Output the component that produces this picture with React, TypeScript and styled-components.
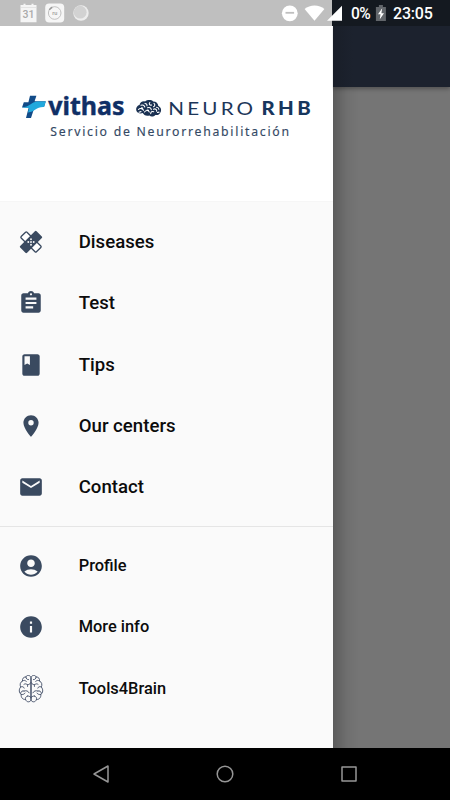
import React from 'react';
import styled, { createGlobalStyle } from 'styled-components';
import { MdAssignment, MdBook, MdPlace, MdEmail, MdAccountCircle, MdInfo } from 'react-icons/md';

const GlobalStyle = createGlobalStyle`
  * { box-sizing: border-box; }
  body { margin: 0; background: #000; font-family: Roboto, sans-serif; }
  svg { display: block; flex: none; }
`;

const Screen = styled.div`
  width: 450px;
  height: 800px;
  display: flex;
  flex-direction: column;
  overflow: hidden;
  background: #000;
`;

const StatusBar = styled.header`
  height: 26px;
  flex: none;
  display: flex;
  background: linear-gradient(90deg, #bfbfbf 332.5px, #141920 332.5px);
`;

const Notifications = styled.div`
  width: 270px;
  display: flex;
  padding: 3px 0 0 19px;
`;

const SystemIcons = styled.div`
  display: flex;
  width: 180px;
  padding-top: 4px;
  color: #fff;
`;

const Percent = styled.span`
  width: 25px;
  padding-left: 1px;
  font-size: 15.6px;
  font-weight: 500;
  line-height: 20px;
  letter-spacing: -0.7px;
`;

const Clock = styled.span`
  margin-left: -1px;
  font-size: 16px;
  font-weight: 500;
  line-height: 20px;
  letter-spacing: -0.2px;
`;

const Body = styled.div`
  height: 722px;
  flex: none;
  display: flex;
`;

const Drawer = styled.nav`
  width: 332.5px;
  flex: none;
  background: #fafafa;
`;

const DrawerHeader = styled.div`
  height: 176px;
  background: #fff;
  border-bottom: 1px solid #f6f6f6;
`;

const List = styled.ul<{ $top?: number }>`
  list-style: none;
  margin: 0;
  padding: ${(p) => p.$top ?? 0}px 0 0;
`;

const Row = styled.li`
  height: 61.25px;
  display: flex;
  align-items: center;
  padding-left: 17.5px;
  color: #3a4a60;
`;

const IconSlot = styled.span`
  width: 61.2px;
  display: flex;
`;

const Label = styled.span<{ $small?: boolean }>`
  color: #0c0c0c;
  font-weight: 500;
  font-size: ${(p) => (p.$small ? 16.4 : 18.6)}px;
  letter-spacing: ${(p) => (p.$small ? 0 : 0.02)}px;
  line-height: 24px;
`;

const Divider = styled.hr`
  margin: 8px 0 8.6px;
  border: 0;
  border-top: 1px solid #e5e5e5;
`;

const Scrim = styled.main`
  flex: 1;
  display: flex;
  flex-direction: column;
  background:
    linear-gradient(90deg, rgba(0, 0, 0, 0.22), rgba(0, 0, 0, 0.05) 14px, transparent 26px),
    #757575;
`;

const AppBar = styled.div`
  height: 61px;
  flex: none;
  background: linear-gradient(90deg, #191e28, #1c222e 20px);
  box-shadow: 0 2px 4px rgba(0, 0, 0, 0.3);
  clip-path: inset(0 0 -8px 0);
`;

const NavBar = styled.footer`
  height: 52px;
  flex: none;
  display: grid;
  grid-template-columns: repeat(3, 1fr);
  padding: 0 38.5px;
  justify-items: center;
  align-items: center;
`;

const NavGlyph = styled.svg`
  fill: none;
  stroke: #969696;
  stroke-width: 1.5;
  stroke-linejoin: round;
`;

const CalendarIcon = () => (
  <svg width="21" height="20" viewBox="0 0 21 20">
    <path d="M1.5 2h3V.7h2V2h6V.7h2V2h3v17.3h-16z" fill="#f5f5f5" />
    <path d="M2 4.5h15" stroke="#d8d8d8" strokeWidth=".6" />
    <text x="9.5" y="15.3" textAnchor="middle" fontFamily="Roboto" fontWeight="500" fontSize="10.5" fill="#aaa">31</text>
  </svg>
);

const RecorderIcon = () => (
  <svg width="32" height="20" viewBox="0 0 32 20">
    <rect x="5.2" y=".5" width="19" height="19" rx="4" fill="#f6f6f6" />
    <circle cx="14.7" cy="10" r="6.3" fill="none" stroke="#bbb" strokeWidth=".9" />
    <path d="M9.3 6.8a6.3 6.3 0 0 1 3-2.6" fill="none" stroke="#999" strokeWidth="1.5" />
    <text x="14.7" y="12" textAnchor="middle" fontFamily="Roboto" fontSize="5.5" fontWeight="700" fill="#aaa">ru</text>
  </svg>
);

const SphereIcon = () => (
  <svg width="18" height="20" viewBox="0 0 18 20">
    <circle cx="9" cy="10" r="7.7" fill="#ededed" />
    <circle cx="8.2" cy="9.2" r="6.4" fill="#d2d2d2" />
  </svg>
);

const StatusGlyphs = () => (
  <svg width="80" height="20" viewBox="0 0 80 20" fill="#fff">
    <circle cx="19.8" cy="9.3" r="7.9" />
    <path d="M15.5 8.8h8.6" stroke="#bfbfbf" strokeWidth="1.8" />
    <path d="M34.6 4.9C39.8.2 49.4.2 54.4 4.9L44.5 16.7z" />
    <path d="M72 1.8v15H57z" />
  </svg>
);

const BatteryIcon = () => (
  <svg width="19" height="20" viewBox="0 0 19 20">
    <path d="M.9 3h3V1h4v2h3v14H.9z" fill="#62666b" />
    <path d="M7.2 4.2 3 10.3h2.5l-.7 5 4.2-6H6.4z" fill="#fff" />
  </svg>
);

const BandageIcon = () => (
  <svg width="26" height="26" viewBox="0 0 26 26">
    <g transform="rotate(45 13 13)">
      <rect x="2.2" y="8.9" width="21.6" height="8.2" rx="1" fill="#fff" stroke="currentColor" strokeWidth="1.3" />
    </g>
    <g transform="rotate(-45 13 13)">
      <rect x="1.4" y="8.1" width="23.2" height="9.8" rx="1.2" fill="currentColor" />
    </g>
    <g fill="#fafafa">
      <circle cx="13" cy="10.3" r=".95" />
      <circle cx="10.3" cy="13" r=".95" />
      <circle cx="13" cy="13" r=".95" />
      <circle cx="15.7" cy="13" r=".95" />
      <circle cx="13" cy="15.7" r=".95" />
    </g>
  </svg>
);

const hemisphere =
  'M13 2.2C11.5-.5 8.5-.2 8 2 5.3 1.8 4.1 4 4.5 6 2 7.2 1.6 10 2.8 12 .6 14 .9 18 3.2 19.4 2.8 22.6 5 24.8 7.5 24.4 8.6 27.6 12 27.5 13 25.2z' +
  'M8 2c0 1.8 1 2.7 2.5 2.6M4.5 6c1.2-1 3-.9 3.8.4M6 9.3c2.2-1.4 4 .2 3.6 2.1M9.4 9.8c1.3.1 2.5-.8 3.4-2M2.8 12c1.4-.8 3-.4 3.4 1.1M6 16c-1.5-.7-3 .4-3.3 2M6.1 16c2.3-.8 4 0 5 1.8M3.2 19.4c1.6.4 3 0 3.8-1.3M7.5 24.4c-.4-1.6.4-3 2-3.4M9.4 21c1.3-.3 2.3.5 3.4 1.4';

const BrainIcon = () => (
  <svg width="26" height="28" viewBox="0 0 26 28" fill="none" stroke="#3d4a63" strokeWidth=".9" strokeLinecap="round">
    <path d={hemisphere} />
    <path d={hemisphere} transform="translate(26 0) scale(-1 1)" />
  </svg>
);

const Logo = () => (
  <svg width="332" height="174" viewBox="0 26 332 174">
    <path d="M30 95.8h6.4l-1.8 5.4h11.2L44 107H34.6L31 118h-5l2.7-10.4H22l1.8-5.4h4.6z" fill="#124b88" />
    <path d="M22 107.5c7.5-.2 9.5-5.4 15-5.9h8.8L44 107c-7.6-.4-9.2 5-16 5.4l1.2-4.5z" fill="#22a9dd" />
    <text x="48.3" y="114.6" fontFamily="Noto Sans" fontWeight="700" fontSize="24.3" textLength="76.3" lengthAdjust="spacingAndGlyphs" fill="#102f66" stroke="#102f66" strokeWidth=".4">vithas</text>
    <path d="M136.5 111c-1-3 .5-5.2 3-6 .4-2.8 3-4.2 5.5-3.6 2.5-2 6.5-1.8 8.2 0 3 0 5 2 5 4.3 3 1.6 3.7 4.8 2 7-.8 2.2-3 2.7-4.8 2.2-1.8 1.9-4.5 2-6 .6-3.6.8-5.6-.6-6.6-2.5-2.5 1-5.5.2-6.3-2z" fill="#1b3152" />
    <path d="M138.5 109.5c2-2.2 4.5-.4 5 .8M141 105.2c1.8-.7 3.2.2 3.8 1.8M145 103.5c1.4 0 2.1 1.1 2 2.3M149.8 102.5c-1.4 1.8.2 3.1 1.8 2.5M154 103.4c1.2 1 1 2.7-.5 3.4M147.5 107.7c2-.7 3.5.2 3.8 2M144.5 112c1.6-2 3.8-1.8 4.8 0M150.7 113.6c0-1.8 1.4-2.5 3-1.8M153.5 109.2c2-.9 3.3.4 3.2 2M156.5 107.2c1.2 0 2.2.8 2.3 2M157.5 112.5l1.5-.4M139 112.2l2-.6M147 110l1.5.3M141.5 107.8l1.2.2" fill="none" stroke="#fff" strokeWidth="1.1" strokeLinecap="round" />
    <text x="168.3" y="115.3" fontFamily="Lato" fontSize="18.2" letterSpacing="2.8" textLength="88" lengthAdjust="spacingAndGlyphs" fill="#1c3659">NEURO</text>
    <text x="261.5" y="115.3" fontFamily="Lato" fontWeight="900" fontSize="18.2" letterSpacing="3" textLength="52.5" lengthAdjust="spacingAndGlyphs" fill="#17365d">RHB</text>
    <text x="50.3" y="136.2" fontFamily="Noto Sans" fontSize="13.4" letterSpacing="1.9" textLength="240.5" lengthAdjust="spacingAndGlyphs" fill="#344964" stroke="#344964" strokeWidth=".15">Servicio de Neurorrehabilitación</text>
  </svg>
);

const primary = [
  { label: 'Diseases', icon: <BandageIcon /> },
  { label: 'Test', icon: <MdAssignment size={26} /> },
  { label: 'Tips', icon: <MdBook size={26} /> },
  { label: 'Our centers', icon: <MdPlace size={26} /> },
  { label: 'Contact', icon: <MdEmail size={26} /> },
];

const secondary = [
  { label: 'Profile', icon: <MdAccountCircle size={26} /> },
  { label: 'More info', icon: <MdInfo size={26} /> },
  { label: 'Tools4Brain', icon: <BrainIcon /> },
];

export default function App() {
  return (
    <Screen>
      <GlobalStyle />
      <StatusBar>
        <Notifications>
          <CalendarIcon />
          <RecorderIcon />
          <SphereIcon />
        </Notifications>
        <SystemIcons>
          <StatusGlyphs />
          <Percent>0%</Percent>
          <BatteryIcon />
          <Clock>23:05</Clock>
        </SystemIcons>
      </StatusBar>
      <Body>
        <Drawer>
          <DrawerHeader>
            <Logo />
          </DrawerHeader>
          <List $top={9.6}>
            {primary.map((item) => (
              <Row key={item.label}>
                <IconSlot>{item.icon}</IconSlot>
                <Label>{item.label}</Label>
              </Row>
            ))}
          </List>
          <Divider />
          <List>
            {secondary.map((item) => (
              <Row key={item.label}>
                <IconSlot>{item.icon}</IconSlot>
                <Label $small>{item.label}</Label>
              </Row>
            ))}
          </List>
        </Drawer>
        <Scrim>
          <AppBar />
        </Scrim>
      </Body>
      <NavBar>
        <NavGlyph width="18" height="20" viewBox="0 0 18 20">
          <path d="M2 10 16 2v16z" />
        </NavGlyph>
        <NavGlyph width="20" height="20" viewBox="0 0 20 20">
          <circle cx="10" cy="10" r="7.8" />
        </NavGlyph>
        <NavGlyph width="18" height="18" viewBox="0 0 18 18">
          <rect x="2" y="2" width="14" height="14" />
        </NavGlyph>
      </NavBar>
    </Screen>
  );
}
